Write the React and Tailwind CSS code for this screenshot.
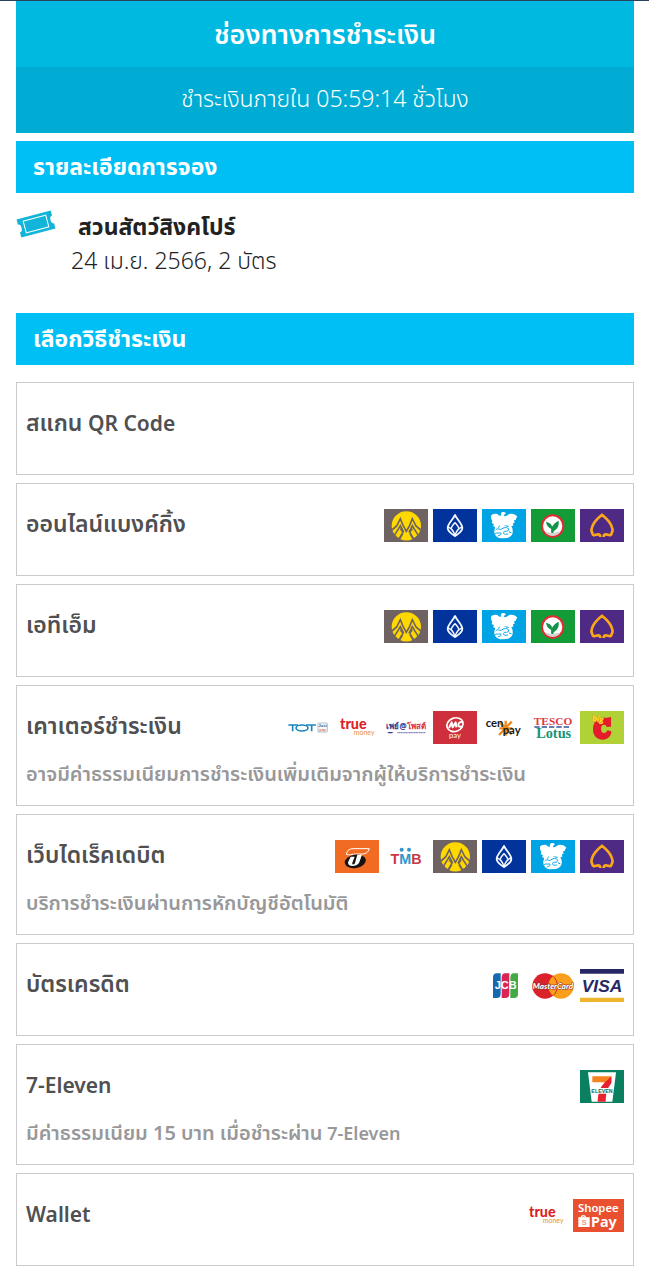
const svgProps = { viewBox: '0 0 132 99', role: 'img', className: 'block h-[33px] w-11 shrink-0' };
const sans = '"Liberation Sans", sans-serif';
const lato = 'Lato, sans-serif';

function Krungsri() {
  return (
    <svg {...svgProps} aria-label="Krungsri">
      <rect width="132" height="99" fill="#6f6263" />
      <path d="M30 74c-4-7-7-15-7-24C23 26 43 7 67 7s44 19 44 43c0 9-3 17-7 24z" fill="#ffd800" />
      <path d="M30 74l15-18-3 30zM104 74L89 56l3 30zM62 62h10l2 10 11 19c-12 5-24 5-36 0l11-19z" fill="#ffd800" />
      <g fill="none" stroke="#6f6263" strokeWidth="5">
        <path d="M24 63l14-12 11-22 8 20 10 18 10-18 8-20 11 22 14 12" />
        <path d="M31 79l11-17 7-12 10 20M103 79L92 62l-7-12-10 20" />
      </g>
      <path fill="#6f6263" d="M50 56l9 14-13 20-6-3zM84 56l-9 14 13 20 6-3z" />
      <path fill="#ffd800" d="M48 62l6 8-10 17-6-6zM86 62l-6 8 10 17 6-6z" />
    </svg>
  );
}

function Bangkok() {
  return (
    <svg {...svgProps} aria-label="Bangkok Bank">
      <rect width="132" height="99" fill="#00339c" />
      <g fill="none" stroke="#f4f8ff" strokeWidth="5.5" strokeLinejoin="round">
        <path d="M66 18C59 33 44 44 44 57c0 11 12 18 22 24 10-6 22-13 22-24 0-13-15-24-22-39z" />
        <path d="M45 54c10 3 17 12 21 26 4-14 11-23 21-26" strokeWidth="4.5" />
        <path d="M55 58c1-7 6-11 11-17 5 6 10 10 11 17" strokeWidth="4.5" />
      </g>
    </svg>
  );
}

function Krungthai() {
  return (
    <svg {...svgProps} aria-label="Krungthai">
      <rect width="132" height="99" fill="#00a4e4" />
      <path fill="#fff" d="M27 20c4-5 11-7 18-5 4 2 7 6 11 6l1-8c3-6 11-5 15 0l-6 5 1 4c6 1 9-5 15-7 9-3 19 1 24 8-3 3-4 6-5 10l-5 1 2 7-5 2 1 7-6 1v7l-7-1-9-8-13 1-9 8-7 8c-4-3-4-8-4-12l-6-3 3-5-7-4 2-6c-2-3-3-6-4-9z" />
      <path fill="#fff" d="M42 47c6-7 14-7 20-3l5 6 12-3c8 1 13 8 13 17 2 12-6 21-17 23l-15 1c-12 0-22-7-23-19-1-8 3-16 10-22z" />
      <g fill="none" stroke="#00a4e4" strokeWidth="3" strokeLinecap="round">
        <path d="M42 62c6-7 11 2 17-2s9-5 15-4 8 7 3 10-10-2-12 4 6 7 12 5" />
        <path d="M40 74c4-5 8 0 12-2s7 1 4 5-6 1-8 4M50 55l2-4M72 51l7 1M82 69l5 2" />
      </g>
    </svg>
  );
}

function Kasikorn() {
  return (
    <svg {...svgProps} aria-label="Kasikornbank">
      <rect width="132" height="99" fill="#139b37" />
      <circle cx="65" cy="51" r="32" fill="#fff" stroke="#e02b32" strokeWidth="6" />
      <path fill="#119447" d="M61 73c-2-10 0-17 4-23 5-7 11-12 18-15 1 12-1 21-9 27-5 3-7 6-7 11zM61 60c-9-4-15-12-16-22 9 2 15 6 18 13z" />
      <path fill="#d3d3d3" d="M42 68c8 0 14 2 21 6 7-4 14-6 25-6-4 8-12 12-23 12s-19-4-23-12z" />
    </svg>
  );
}

function Scb() {
  return (
    <svg {...svgProps} aria-label="SCB">
      <rect width="132" height="99" fill="#4e2a84" />
      <path d="M61 84c0-6-2-8-7-8s-9 4-14 2c-3-1-2-5-4-8-3-4-2-9 0-15 4-14 15-26 30-38 15 12 26 24 30 38 2 6 3 11 0 15-2 3-1 7-4 8-5 2-9-2-14-2s-7 2-7 8" fill="none" stroke="#fba71a" strokeWidth="8" strokeLinejoin="round" />
    </svg>
  );
}

function Tot() {
  return (
    <svg {...svgProps} aria-label="TOT just pay">
      <path d="M7 42h29M20 43v18M60 42h30M77 43v18" stroke="#1b86bd" strokeWidth="5" fill="none" />
      <ellipse cx="48" cy="51" rx="18" ry="9" stroke="#1b86bd" strokeWidth="5" fill="none" />
      <rect x="96" y="36" width="28" height="27" rx="2" fill="#f6f8fb" stroke="#88a5bd" strokeWidth="2" />
      <text x="110" y="48" textAnchor="middle" fontSize="12" fontWeight="700" fill="#355f87" fontFamily={sans}>Just</text>
      <text x="110" y="60" textAnchor="middle" fontSize="12" fontWeight="700" fill="#dc7d63" fontFamily={sans}>pay</text>
    </svg>
  );
}

function TrueMoney() {
  return (
    <svg {...svgProps} aria-label="true money">
      <text x="15" y="54" fontSize="43" fontWeight="900" fill="#dc1f26" fontFamily={lato}>true</text>
      <text x="56" y="71" fontSize="21" fill="#e89038" fontFamily={lato}>money</text>
    </svg>
  );
}

function PayAtPost() {
  return (
    <svg {...svgProps} aria-label="เพย์แอทโพสต์">
      <text x="66" y="53" textAnchor="middle" fontSize="24" fontWeight="700" fontFamily='"Noto Sans", sans-serif'>
        <tspan fill="#393589">เพย์@</tspan><tspan fill="#dc3140">โพสต์</tspan>
      </text>
      <path d="M10 63h18l-4 4H14z" fill="#393589" />
      <path d="M40 65h84" stroke="#8583bb" strokeWidth="4" strokeDasharray="4 1" />
    </svg>
  );
}

function MPay() {
  return (
    <svg {...svgProps} aria-label="mPAY">
      <rect width="132" height="99" fill="#ce303b" />
      <ellipse cx="66" cy="41" rx="25" ry="20" transform="rotate(-20 66 41)" fill="none" stroke="#fff" strokeWidth="5" />
      <path d="M48 51l8-17 3 15 9-15 2 15M90 34c-8-3-13 1-14 7s6 8 12 5" fill="none" stroke="#fff" strokeWidth="6" strokeLinejoin="round" />
      <text x="66" y="80" textAnchor="middle" fontSize="23" fill="#fff" fontFamily={lato}>pay</text>
    </svg>
  );
}

function CenPay() {
  return (
    <svg {...svgProps} aria-label="cenpay">
      <g stroke="#ee8a1d" strokeWidth="7">
        <path d="M54 34l35 36M89 32L51 72M71 29v45M52 52h39" />
      </g>
      <text x="11" y="47" fontSize="34" fontWeight="700" fill="#171717" fontFamily={lato}>cen</text>
      <text x="62" y="68" fontSize="34" fontWeight="700" fill="#171717" fontFamily={lato}>pay</text>
    </svg>
  );
}

function Tesco() {
  return (
    <svg {...svgProps} aria-label="TESCO Lotus">
      <text x="66" y="42" textAnchor="middle" fontSize="34" fontWeight="700" fill="#dc3a40" fontFamily='"Liberation Serif", serif'>TESCO</text>
      <path d="M10 48h108" stroke="#34539b" strokeWidth="4" strokeDasharray="16 6" />
      <text x="68" y="81" textAnchor="middle" fontSize="43" fontWeight="700" fill="#159474" fontFamily='"Liberation Serif", serif'>Lotus</text>
    </svg>
  );
}

function BigC() {
  return (
    <svg {...svgProps} aria-label="Big C">
      <rect width="132" height="99" fill="#b0d236" />
      <path fill="#e51c2b" d="M93 18v29l-13 1c-1-5-4-7-8-7-6 0-9 5-9 12 0 8 4 13 9 13 5 0 8-3 10-8l12 3c0 15-11 25-26 25-18 0-29-12-29-31 0-22 13-35 29-35 8 0 15 1 25-2z" />
      <text x="36" y="30" fontSize="25" fontWeight="900" fill="#ffe528" stroke="#d98a1c" strokeWidth="2" paintOrder="stroke" fontFamily={lato} transform="rotate(8 36 30)">big</text>
    </svg>
  );
}

function Thanachart() {
  return (
    <svg {...svgProps} aria-label="Thanachart Bank">
      <rect width="132" height="99" fill="#f26b22" />
      <path d="M34 43c2-11 9-17 20-17h49c-3 10-10 16-20 16H62c-11 0-19 5-28 1z" fill="#f26b22" stroke="#fff" strokeWidth="3" />
      <ellipse cx="61" cy="64" rx="32" ry="20" fill="#171313" transform="rotate(-10 61 64)" />
      <path d="M47 50h12l-7 18c-2 7 6 7 8 1l7-25h14l-9 25c-8 12-34 13-33-2z" fill="#fff" />
    </svg>
  );
}

function Tmb() {
  return (
    <svg {...svgProps} aria-label="TMB">
      <text x="66" y="71" textAnchor="middle" fontSize="43" fontWeight="700" fontFamily={sans}>
        <tspan fill="#cb3746">T</tspan><tspan fill="#3097ce">M</tspan><tspan fill="#cb3746">B</tspan>
      </text>
      <circle cx="53" cy="29" r="6" fill="#3097ce" />
      <circle cx="75" cy="29" r="6" fill="#3097ce" />
    </svg>
  );
}

function Jcb() {
  return (
    <svg {...svgProps} aria-label="JCB">
      <path d="M44 13h12v61q0 13-12 13H33V26q0-13 11-13z" fill="#1769af" />
      <path d="M70 13h12v61q0 13-12 13H59V26q0-13 11-13z" fill="#da2454" />
      <path d="M96 13h12v61q0 13-12 13H85V26q0-13 11-13z" fill="#43a947" />
      <text x="71" y="59" textAnchor="middle" fontSize="33" fontWeight="700" fill="#fff" fontFamily={sans}>JCB</text>
    </svg>
  );
}

function MasterCard() {
  return (
    <svg {...svgProps} aria-label="MasterCard">
      <circle cx="42" cy="51" r="38" fill="#d9222a" />
      <circle cx="90" cy="51" r="38" fill="#f99f1b" />
      <path d="M66 22a38 38 0 0 1 0 58" fill="none" stroke="#d9222a" strokeWidth="3" />
      <text x="66" y="60" textAnchor="middle" fontSize="24" fontWeight="900" fontStyle="italic" fill="#fff" stroke="#8a2c22" strokeWidth="3" paintOrder="stroke" fontFamily={lato}>MasterCard</text>
    </svg>
  );
}

function Visa() {
  return (
    <svg {...svgProps} aria-label="VISA">
      <path d="M0 0h132v14H0z" fill="#282765" />
      <path d="M0 86h132v13H0z" fill="#eeb52f" />
      <text x="66" y="69" textAnchor="middle" fontSize="52" fontWeight="700" fontStyle="italic" fill="#282765" fontFamily={sans}>VISA</text>
    </svg>
  );
}

function SevenEleven() {
  return (
    <svg {...svgProps} aria-label="7-Eleven">
      <rect width="132" height="99" fill="#0a8060" />
      <path d="M24 7h84L97 95H35z" fill="#fff" />
      <path d="M37 19h57v19H74l-7-1H37z" fill="#f58220" />
      <path d="M94 19v20C85 53 78 59 77 95H53c1-27 7-44 21-57z" fill="#e5222e" />
      <path d="M34 54h64l-2 17H37z" fill="#fff" />
      <text x="66" y="69" textAnchor="middle" fontSize="16" fontWeight="700" fill="#087052" fontFamily={sans}>ELEVEN</text>
    </svg>
  );
}

function ShopeePay() {
  return (
    <svg viewBox="0 0 153 99" role="img" aria-label="ShopeePay" className="block h-[33px] w-[51px] shrink-0">
      <rect width="153" height="99" fill="#e9502f" />
      <text x="76" y="38" textAnchor="middle" fontSize="34" fontWeight="600" fill="#fff" fontFamily='"Noto Sans", sans-serif'>Shopee</text>
      <path d="M16 55h7c1-9 15-9 16 0h11v29H16z" fill="#fff" />
      <path d="M28 55c0-4 6-4 6 0" stroke="#e9502f" strokeWidth="2" fill="none" />
      <text x="33" y="79" textAnchor="middle" fontSize="23" fontWeight="700" fill="#f19a85" fontFamily={sans}>S</text>
      <text x="54" y="84" fontSize="43" fontWeight="700" fill="#fff" fontFamily='"Noto Sans", sans-serif'>Pay</text>
    </svg>
  );
}

const methods = [
  { title: 'สแกน', latin: 'QR Code', logos: [] },
  { title: 'ออนไลน์แบงค์กิ้ง', logos: [Krungsri, Bangkok, Krungthai, Kasikorn, Scb] },
  { title: 'เอทีเอ็ม', logos: [Krungsri, Bangkok, Krungthai, Kasikorn, Scb] },
  {
    title: 'เคาเตอร์ชำระเงิน',
    note: 'อาจมีค่าธรรมเนียมการชำระเงินเพิ่มเติมจากผู้ให้บริการชำระเงิน',
    logos: [Tot, TrueMoney, PayAtPost, MPay, CenPay, Tesco, BigC],
  },
  {
    title: 'เว็บไดเร็คเดบิต',
    note: 'บริการชำระเงินผ่านการหักบัญชีอัตโนมัติ',
    logos: [Thanachart, Tmb, Krungsri, Bangkok, Krungthai, Scb],
  },
  { title: 'บัตรเครดิต', logos: [Jcb, MasterCard, Visa] },
  { latin: '7-Eleven', note: 'มีค่าธรรมเนียม 15 บาท เมื่อชำระผ่าน', noteLatin: '7-Eleven', logos: [SevenEleven] },
  { latin: 'Wallet', logos: [TrueMoney, ShopeePay] },
];

function SectionBar({ children }) {
  return <h2 className="flex h-[52px] items-center bg-[#00bff5] px-[17px] pb-0.5 text-[23px] leading-8 font-bold text-white">{children}</h2>;
}

function Method({ title, latin, note, noteLatin, logos }) {
  return (
    <button type="button" className={`block w-full cursor-pointer border border-[#cbcbcd] bg-white px-[9px] pt-[25px] text-left ${note ? 'pb-[17px]' : 'pb-[33px]'}`}>
      <span className="flex h-[33px] items-start justify-between">
        <span className="text-[23px] leading-7 font-semibold whitespace-nowrap text-[#505052]">
          {title}
          {latin && <span className="text-[21px]">{title ? ' ' : ''}{latin}</span>}
        </span>
        <span className="flex gap-[5px]">
          {logos.map((Logo, i) => <Logo key={i} />)}
        </span>
      </span>
      {note && (
        <span className="mt-4 block text-[20px] leading-7 font-semibold whitespace-nowrap text-[#98989a]">
          {note}
          {noteLatin && <span className="text-[18px]"> {noteLatin}</span>}
        </span>
      )}
    </button>
  );
}

export default function App() {
  return (
    <main className="border-t border-[#29435c] bg-white pr-[15px] pb-[15px] pl-4 font-['Noto_Sans','Noto_Sans_Thai',sans-serif]">
      <header className="text-center text-white">
        <h1 className="flex h-[66px] items-center justify-center bg-[#00b9e1] text-[27px] leading-8 font-semibold">ช่องทางการชำระเงิน</h1>
        <p className="flex h-[66px] items-center justify-center bg-[#00acd3] pb-1 text-[23px] leading-8 font-light">ชำระเงินภายใน 05:59:14 ชั่วโมง</p>
      </header>
      <section className="mt-2">
        <SectionBar>รายละเอียดการจอง</SectionBar>
        <div className="flex h-[120px] items-start pt-4">
          <svg viewBox="0 0 120 84" className="mt-px h-7 w-10 shrink-0" aria-hidden="true">
            <g transform="rotate(-15 60 42)">
              <path d="M7 14h106v16q-8 0-8 12t8 12v16H7V54q8 0 8-12T7 30z" fill="#12b5d9" />
              <rect x="25" y="24" width="70" height="36" fill="none" stroke="#fff" strokeWidth="3" />
            </g>
          </svg>
          <div className="pl-[15px]">
            <h3 className="pl-[7px] text-[23px] leading-[34px] font-bold text-[#222]">สวนสัตว์สิงคโปร์</h3>
            <p className="text-[23px] leading-[34px] font-light text-[#222]">24 เม.ย. 2566, 2 บัตร</p>
          </div>
        </div>
      </section>
      <section>
        <SectionBar>เลือกวิธีชำระเงิน</SectionBar>
        <div className="mt-[17px] flex flex-col gap-2">
          {methods.map((m) => <Method key={m.title ?? m.latin} {...m} />)}
        </div>
      </section>
    </main>
  );
}
